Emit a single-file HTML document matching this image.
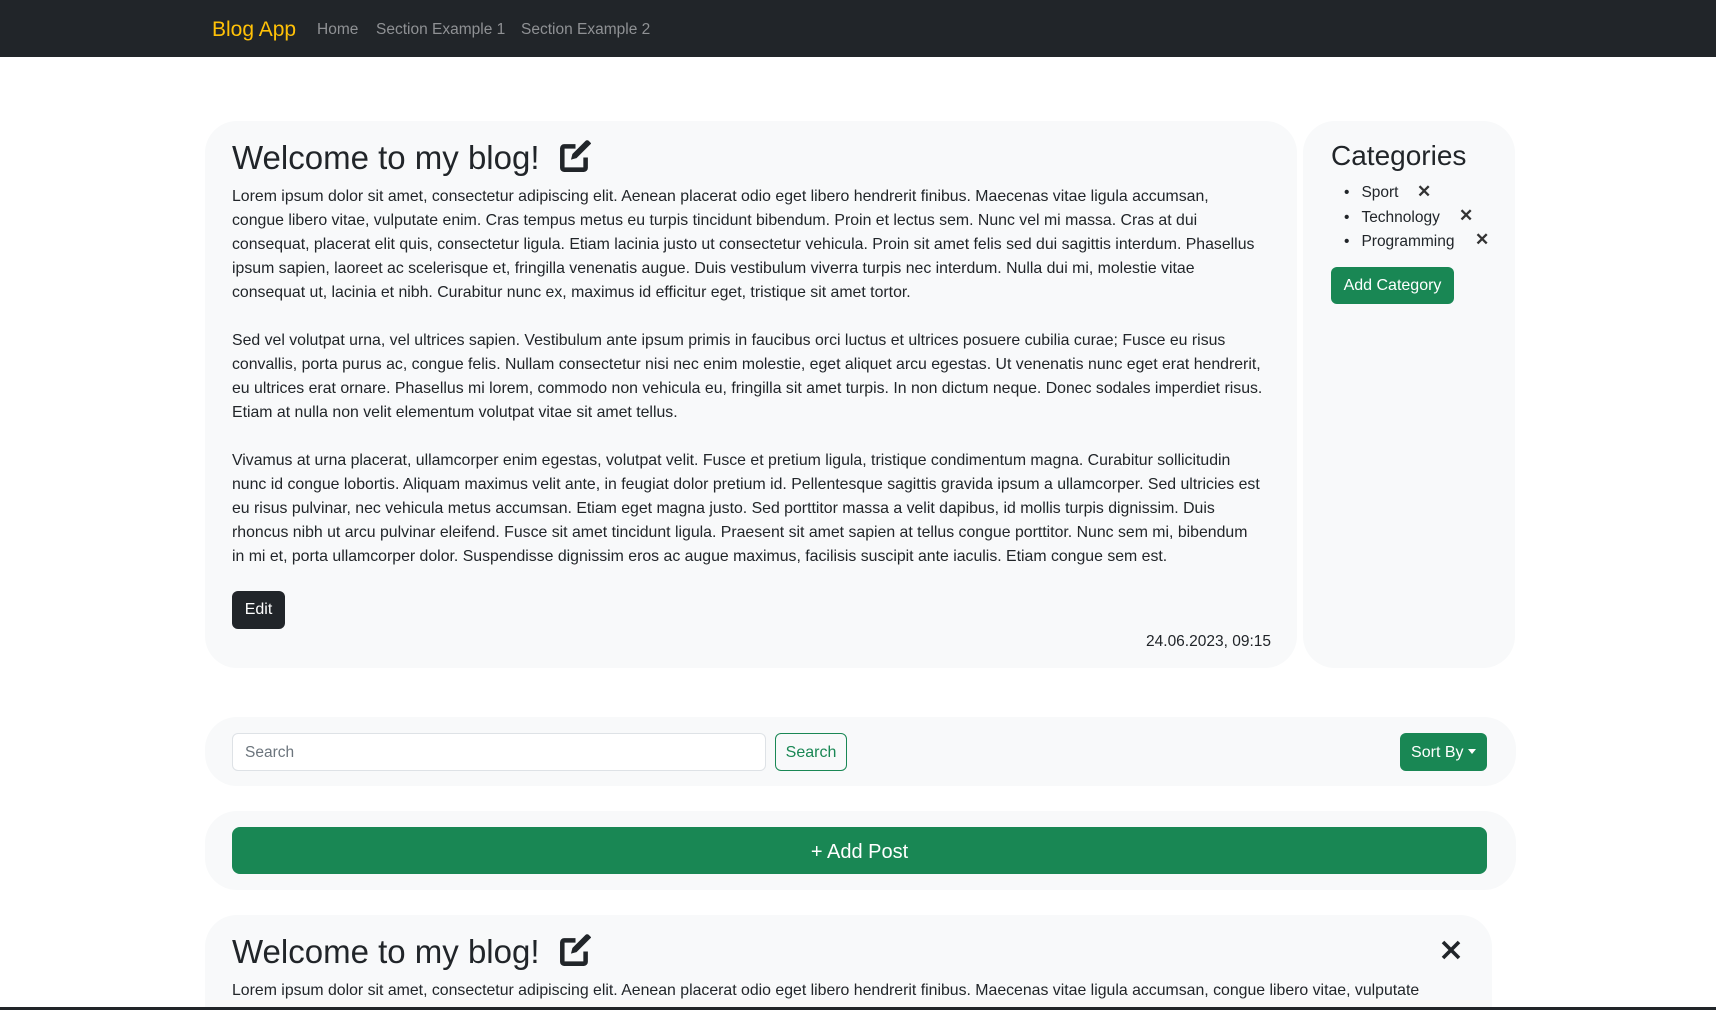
<!DOCTYPE html>
<html><head><meta charset="utf-8"><style>
*{box-sizing:border-box;margin:0;padding:0}
html,body{width:1716px;height:1010px;overflow:hidden}
body{background:#fff;font-family:"Liberation Sans",sans-serif;color:#212529}
#w{position:relative;width:1716px;height:1010px;overflow:hidden}
.nav{position:absolute;left:0;top:0;width:1716px;height:57px;background:#212529}
.nav span{position:absolute;top:1px;line-height:57px;white-space:nowrap}
.card{position:absolute;background:#f8f9fa;border-radius:32px}
.abs{position:absolute;white-space:nowrap}
.p{font-size:15.85px;line-height:24px}
.btn{position:absolute;border-radius:6px;text-align:center;color:#fff;font-size:16px}
</style></head><body><div id="w">
<div class="nav">
<span style="left:212px;font-size:21px;color:#ffc107">Blog App</span>
<span style="left:317px;font-size:15.5px;color:#8f9194">Home</span>
<span style="left:376px;font-size:15.5px;color:#8f9194">Section Example 1</span>
<span style="left:521px;font-size:15.5px;color:#8f9194">Section Example 2</span>
</div>

<div class="card" style="left:205px;top:121px;width:1092px;height:547px"></div>
<div class="card" style="left:1303px;top:121px;width:212px;height:547px"></div>

<div class="abs" style="left:232px;top:138px;font-size:33px;line-height:40px">Welcome to my blog!</div>
<svg class="abs" style="left:559px;top:140px" width="33" height="33" viewBox="0 0 16 16"><path fill="#212529" d="M15.5 1.5l-1-1a1.2 1.2 0 0 0-1.7 0L6.5 6.8 5.8 9.5 8.5 8.8l6.3-6.3.7-.7a.5.5 0 0 0 0 .0zM2.5 2A2 2 0 0 0 .5 4v9.5a2 2 0 0 0 2 2H12a2 2 0 0 0 2-2V8.5h-2.2v4.8H2.7V4.2h5.3V2z"/></svg>

<div class="abs p" style="left:232px;top:185px">Lorem ipsum dolor sit amet, consectetur adipiscing elit. Aenean placerat odio eget libero hendrerit finibus. Maecenas vitae ligula accumsan,<br>congue libero vitae, vulputate enim. Cras tempus metus eu turpis tincidunt bibendum. Proin et lectus sem. Nunc vel mi massa. Cras at dui<br>consequat, placerat elit quis, consectetur ligula. Etiam lacinia justo ut consectetur vehicula. Proin sit amet felis sed dui sagittis interdum. Phasellus<br>ipsum sapien, laoreet ac scelerisque et, fringilla venenatis augue. Duis vestibulum viverra turpis nec interdum. Nulla dui mi, molestie vitae<br>consequat ut, lacinia et nibh. Curabitur nunc ex, maximus id efficitur eget, tristique sit amet tortor.</div>
<div class="abs p" style="left:232px;top:329px">Sed vel volutpat urna, vel ultrices sapien. Vestibulum ante ipsum primis in faucibus orci luctus et ultrices posuere cubilia curae; Fusce eu risus<br>convallis, porta purus ac, congue felis. Nullam consectetur nisi nec enim molestie, eget aliquet arcu egestas. Ut venenatis nunc eget erat hendrerit,<br>eu ultrices erat ornare. Phasellus mi lorem, commodo non vehicula eu, fringilla sit amet turpis. In non dictum neque. Donec sodales imperdiet risus.<br>Etiam at nulla non velit elementum volutpat vitae sit amet tellus.</div>
<div class="abs p" style="left:232px;top:449px">Vivamus at urna placerat, ullamcorper enim egestas, volutpat velit. Fusce et pretium ligula, tristique condimentum magna. Curabitur sollicitudin<br>nunc id congue lobortis. Aliquam maximus velit ante, in feugiat dolor pretium id. Pellentesque sagittis gravida ipsum a ullamcorper. Sed ultricies est<br>eu risus pulvinar, nec vehicula metus accumsan. Etiam eget magna justo. Sed porttitor massa a velit dapibus, id mollis turpis dignissim. Duis<br>rhoncus nibh ut arcu pulvinar eleifend. Fusce sit amet tincidunt ligula. Praesent sit amet sapien at tellus congue porttitor. Nunc sem mi, bibendum<br>in mi et, porta ullamcorper dolor. Suspendisse dignissim eros ac augue maximus, facilisis suscipit ante iaculis. Etiam congue sem est.</div>

<div class="btn" style="left:232px;top:591px;width:53px;height:38px;line-height:38px;background:#212529">Edit</div>
<div class="abs" style="right:445px;top:631px;font-size:15.5px;line-height:22px">24.06.2023, 09:15</div>

<div class="abs" style="left:1331px;top:139px;font-size:28px;line-height:34px">Categories</div>
<div class="abs" style="left:1344px;top:181px;font-size:15.5px;line-height:24.5px">
<div><span style="margin-right:12px">•</span>Sport</div>
<div><span style="margin-right:12px">•</span>Technology</div>
<div><span style="margin-right:12px">•</span>Programming</div>
</div>
<div class="abs" style="left:1417px;top:180px;font-size:17px;font-weight:bold;line-height:24.5px;color:#333">✕</div>
<div class="abs" style="left:1459px;top:204px;font-size:17px;font-weight:bold;line-height:24.5px;color:#333">✕</div>
<div class="abs" style="left:1475px;top:228px;font-size:17px;font-weight:bold;line-height:24.5px;color:#333">✕</div>
<div class="btn" style="left:1331px;top:267px;width:123px;height:37px;line-height:38px;background:#198754">Add Category</div>

<div class="card" style="left:205px;top:717px;width:1311px;height:69px"></div>
<div class="abs" style="left:232px;top:733px;width:534px;height:38px;background:#fff;border:1px solid #dee2e6;border-radius:6px;font-size:15.5px;line-height:38px;padding-left:12px;color:#6c757d">Search</div>
<div class="btn" style="left:775px;top:733px;width:72px;height:38px;line-height:38px;border:1px solid #198754;color:#198754;background:transparent">Search</div>
<div class="btn" style="left:1400px;top:733px;width:87px;height:38px;line-height:40px;background:#198754">Sort By <span style="display:inline-block;border-left:4px solid transparent;border-right:4px solid transparent;border-top:5px solid #fff;vertical-align:3px"></span></div>

<div class="card" style="left:205px;top:811px;width:1311px;height:79px"></div>
<div class="btn" style="left:232px;top:827px;width:1255px;height:47px;line-height:50px;background:#198754;font-size:20px;border-radius:8px">+ Add Post</div>

<div class="card" style="left:205px;top:915px;width:1287px;height:140px"></div>
<div class="abs" style="left:232px;top:932px;font-size:33px;line-height:40px">Welcome to my blog!</div>
<svg class="abs" style="left:559px;top:934px" width="33" height="33" viewBox="0 0 16 16"><path fill="#212529" d="M15.5 1.5l-1-1a1.2 1.2 0 0 0-1.7 0L6.5 6.8 5.8 9.5 8.5 8.8l6.3-6.3.7-.7a.5.5 0 0 0 0 .0zM2.5 2A2 2 0 0 0 .5 4v9.5a2 2 0 0 0 2 2H12a2 2 0 0 0 2-2V8.5h-2.2v4.8H2.7V4.2h5.3V2z"/></svg>
<svg class="abs" style="left:1440px;top:939px" width="22" height="22" viewBox="0 0 22 22"><path d="M3 3L19 19M19 3L3 19" stroke="#212529" stroke-width="3.6"/></svg>
<div class="abs p" style="left:232px;top:979px">Lorem ipsum dolor sit amet, consectetur adipiscing elit. Aenean placerat odio eget libero hendrerit finibus. Maecenas vitae ligula accumsan, congue libero vitae, vulputate<br>enim. Cras tempus metus eu turpis tincidunt bibendum.</div>
<div class="abs" style="left:0;top:1007px;width:1716px;height:3px;background:#212529"></div>
</div></body></html>
